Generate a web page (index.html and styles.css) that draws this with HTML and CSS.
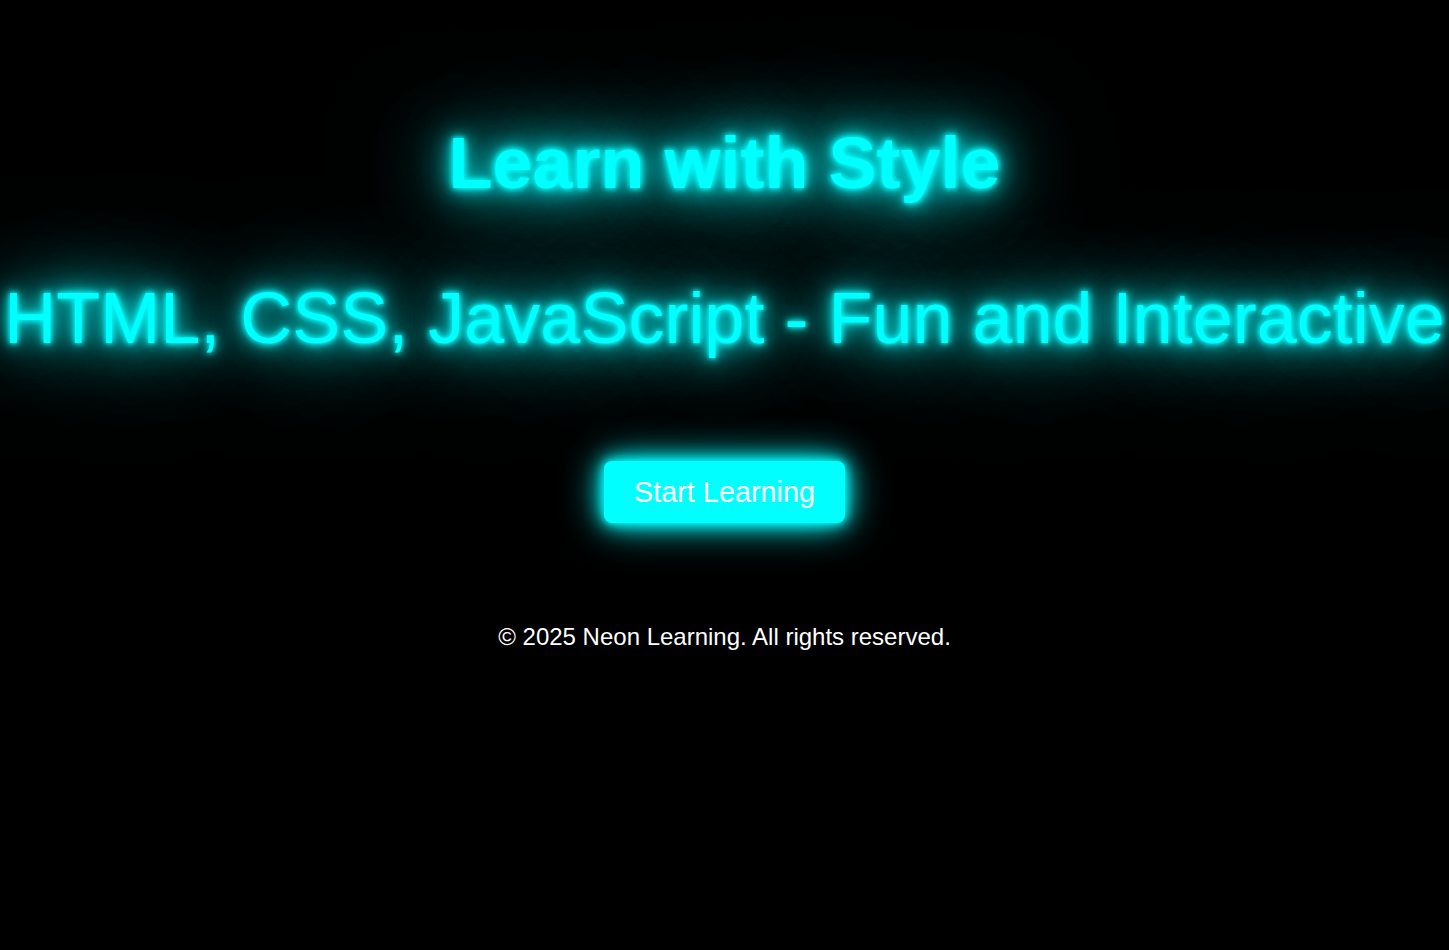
FILE: index.html
```html
<!DOCTYPE html>
<html lang="en">
<head>
<meta charset="utf-8">
<title>Neon Learning</title>
<link rel="stylesheet" href="styles.css">
</head>
<body>
<main class="page">
  <header class="hero">
    <h1 class="hero-title">Learn with Style</h1>
    <p class="hero-subtitle">HTML, CSS, JavaScript - Fun and Interactive</p>
    <button class="cta" type="button">Start Learning</button>
  </header>
  <footer class="site-footer">
    <p class="copyright">&copy; 2025 Neon Learning. All rights reserved.</p>
  </footer>
</main>
</body>
</html>
```
FILE: styles.css
```css
html, body {
  margin: 0;
  padding: 0;
  background: #000;
}

body {
  font-family: "Liberation Sans", Arial, sans-serif;
  color: #fff;
  min-height: 950px;
}

.page {
  display: flex;
  flex-direction: column;
  align-items: center;
  padding-top: 122px;
}

.hero {
  display: flex;
  flex-direction: column;
  align-items: center;
  text-align: center;
}

.hero-title {
  margin: 0;
  font-size: 72px;
  font-weight: bold;
  line-height: 83px;
  color: #0ff;
  text-shadow: 0 0 5px #0ff, 0 0 10px #0ff, 0 0 20px #0ff, 0 0 40px #0ff, 0 0 80px #0ff, 0 0 120px #0ff;
}

.hero-subtitle {
  margin: 72px 0 0;
  font-size: 72px;
  font-weight: normal;
  line-height: 83px;
  color: #0ff;
  white-space: nowrap;
  text-shadow: 0 0 5px #0ff, 0 0 10px #0ff, 0 0 20px #0ff, 0 0 40px #0ff, 0 0 80px #0ff, 0 0 120px #0ff;
}

.cta {
  margin-top: 101px;
  padding: 14px 30px;
  font-family: "Liberation Sans", Arial, sans-serif;
  font-size: 28.8px;
  line-height: 34px;
  color: #fff;
  background: #0ff;
  border: none;
  border-radius: 8px;
  box-shadow: 0 0 10px #0ff, 0 0 20px #0ff, 0 0 40px #0ff;
  cursor: pointer;
}

.site-footer {
  margin-top: 100px;
}

.copyright {
  margin: 0;
  font-size: 24px;
  line-height: 28px;
  text-align: center;
}
```
